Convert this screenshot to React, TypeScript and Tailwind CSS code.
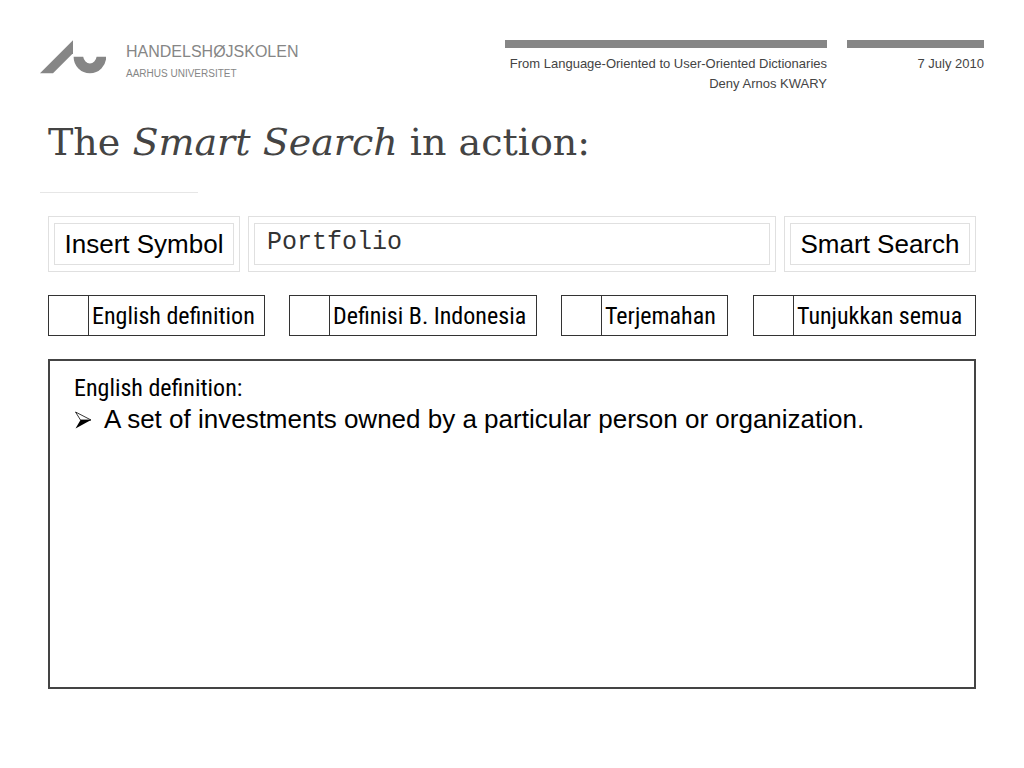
import { useState } from 'react'

const filters = [
  { id: 'english', label: 'English definition', box: 'w-[217px]' },
  { id: 'indonesia', label: 'Definisi B. Indonesia', box: 'w-[248px]' },
  { id: 'terjemahan', label: 'Terjemahan', box: 'w-[167px]' },
  { id: 'semua', label: 'Tunjukkan semua', box: 'ml-auto w-[223px]' },
]

function Logo() {
  return (
    <div className="flex items-start text-[#868686]">
      <svg width="66" height="34" viewBox="0 0 66 34" fill="currentColor" aria-hidden="true">
        <path d="M0 33.3 33 0.3V13.3L13 33.3Z" />
        <path d="M33.6 16.8H43.2A6.8 8 0 0 0 56.6 16.8H66.2A16.3 16.5 0 0 1 33.6 16.8Z" />
      </svg>
      <div className="ml-5">
        <p className="text-[16px] leading-6">HANDELSHØJSKOLEN</p>
        <p className="text-[10px] leading-5">AARHUS UNIVERSITET</p>
      </div>
    </div>
  )
}

export default function App() {
  const [query, setQuery] = useState('Portfolio')

  return (
    <main className="bg-white px-10 pt-10 pb-20 font-['Liberation_Sans',Arial,sans-serif] text-black">
      <header className="flex items-start justify-between">
        <Logo />
        <div className="flex gap-5 text-right text-[13px] leading-5 text-[#444444]">
          <div className="w-[322px] border-t-8 border-[#868686] pt-[6px]">
            <p>From Language-Oriented to User-Oriented Dictionaries</p>
            <p>Deny Arnos KWARY</p>
          </div>
          <div className="w-[137px] border-t-8 border-[#868686] pt-[6px]">
            <p>7 July 2010</p>
          </div>
        </div>
      </header>

      <h1 className="mt-6 pl-2 font-['DejaVu_Serif',serif] text-[38px] leading-[48px] text-[#444444]">
        The <em>Smart Search</em> in action:
      </h1>
      <hr className="mt-[26px] w-[158px] border-[#e6e6e6]" />

      <form className="mt-[23px] flex gap-2 px-2 text-[26px]" onSubmit={(e) => e.preventDefault()}>
        <div className="w-[192px] border border-[#e0e0e0] px-[5px] py-[6px]">
          <button type="button" className="block h-[42px] w-full border border-[#e0e0e0] leading-10 whitespace-nowrap">
            Insert Symbol
          </button>
        </div>
        <div className="min-w-0 flex-1 border border-[#e0e0e0] px-[5px] py-[6px]">
          <input
            type="text"
            aria-label="Search"
            value={query}
            onChange={(e) => setQuery(e.target.value)}
            className="block h-[42px] w-full border border-[#e0e0e0] px-3 pb-1 font-['Liberation_Mono',monospace] text-[25px] text-[#333333] outline-none"
          />
        </div>
        <div className="w-[192px] border border-[#e0e0e0] px-[5px] py-[6px]">
          <button type="submit" className="block h-[42px] w-full border border-[#e0e0e0] leading-10 whitespace-nowrap">
            Smart Search
          </button>
        </div>
      </form>

      <div className="mt-[23px] flex gap-6 px-2 font-['Roboto_Condensed','Liberation_Sans_Narrow',sans-serif] text-[24px]">
        {filters.map((f) => (
          <div key={f.id} className={`flex h-[41px] border border-[#333333] ${f.box}`}>
            <input
              type="checkbox"
              id={f.id}
              className="w-10 shrink-0 appearance-none border-r border-[#333333] checked:bg-gray-300"
            />
            <label htmlFor={f.id} className="flex-1 pl-[3px] leading-10 whitespace-nowrap">
              {f.label}
            </label>
          </div>
        ))}
      </div>

      <section className="mx-2 mt-[23px] min-h-[330px] border-2 border-[#444444] px-6 py-3 text-[26px] leading-[31px]">
        <h2 className="font-['Roboto_Condensed','Liberation_Sans_Narrow',sans-serif] text-[24px] leading-[31px]">
          English definition:
        </h2>
        <ul>
          <li className="flex items-center gap-3">
            <svg width="18" height="18" viewBox="0 0 18 18" aria-hidden="true">
              <path d="M1.5 1 17 9H6.5Z" fill="none" stroke="black" strokeWidth="0.8" />
              <path d="M6.5 9H17L1.5 17.5Z" fill="black" />
            </svg>
            A set of investments owned by a particular person or organization.
          </li>
        </ul>
      </section>
    </main>
  )
}
